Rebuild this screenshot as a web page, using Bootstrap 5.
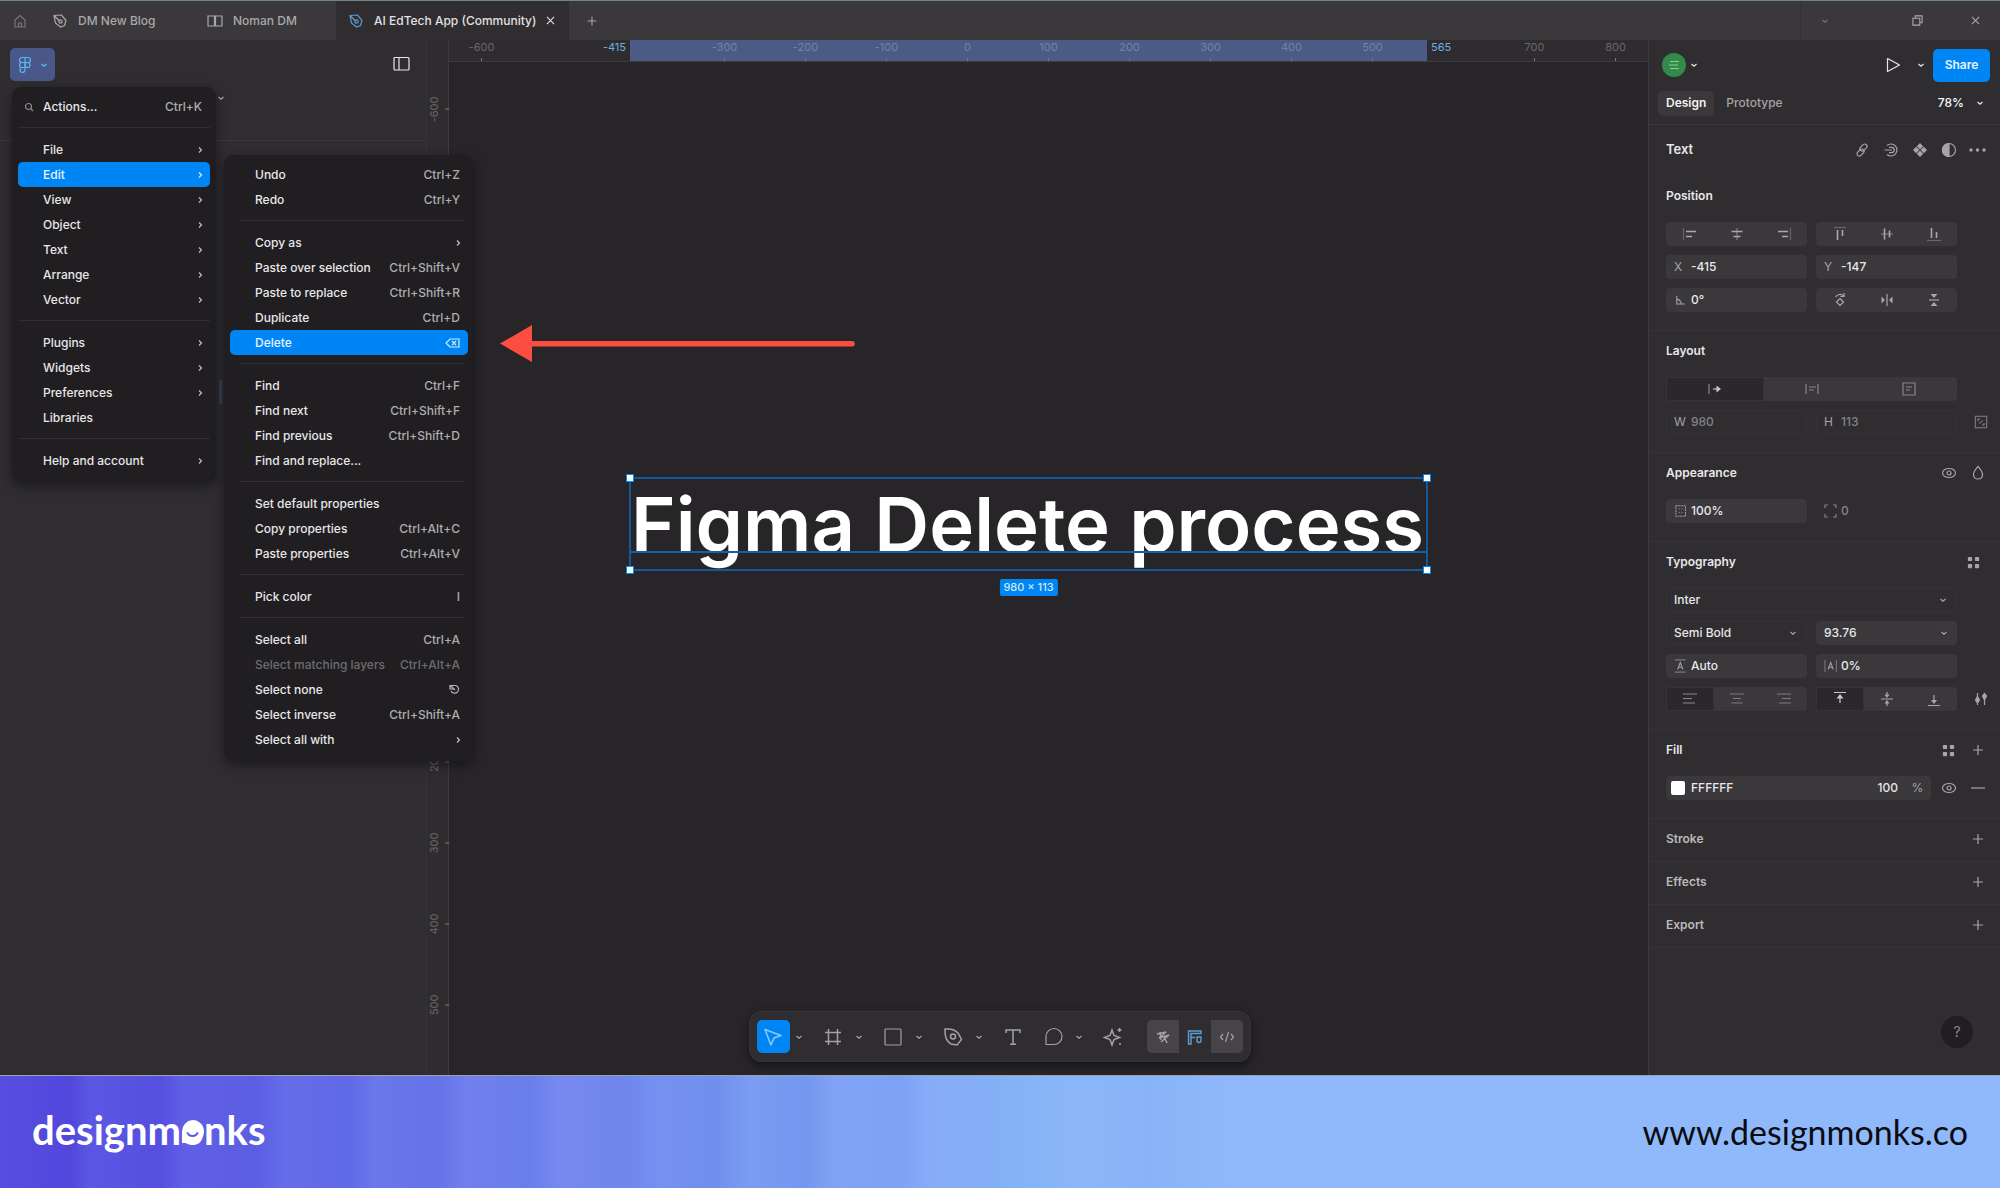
<!DOCTYPE html>
<html lang="en">
<head>
<meta charset="utf-8">
<meta name="viewport" content="width=device-width, initial-scale=1">
<title>AI EdTech App (Community)</title>
<link href="https://cdn.jsdelivr.net/npm/bootstrap@5.3.0/dist/css/bootstrap.min.css" rel="stylesheet">
<style>
:root{--panel:#2f2d30;--canvas:#272528;--menu:#201e21;--line:#39373a;--field:#3a383b;--blue:#0086f4;--dim:#a5a3a6;--txt:#e8e7e9}
body{font-family:Inter,"Liberation Sans",sans-serif;font-size:12px;line-height:16px;background:var(--canvas);color:var(--txt)}
button,input,select{font:inherit;color:inherit;background:none;border:0;padding:0;min-width:0}
ul{list-style:none}
svg{display:block;fill:none;stroke:currentColor;stroke-width:1.2;flex:none}
.ic{width:16px;height:16px}
.caret{width:8px;height:8px}
/* tab strip */
.tabstrip{height:40px;background:#3a383b;border-top:1px solid #6f8580;color:#a9a8aa;font-weight:500}
.homebtn{width:40px;padding-left:12px}
.filetab{gap:10px;padding-left:12px;color:#a9a8aa;font-weight:500}
.tab-a{width:155px}
.tab-b{width:141px}
.filetab.current{width:233px;padding-right:15px;background:var(--panel);color:#e2e1e3}
.filetab.current>svg{color:#5b9bd0}
.winbtns{width:200px;border-left:1px solid #343235}
/* left side */
.leftside{width:426px;flex:none;background:var(--panel)}
.lefthead{height:101px;border-bottom:1px solid var(--line);padding:8px 16px 0 10px}
.mainbtn{width:45px;height:33px;border-radius:5px;background:#4a5889;color:#5cb6f5}
.vruler{width:23px;flex:none;background:#2e2c2f;border-right:1px solid #3d3b3e;border-left:1px solid #343235;color:#6b696c;font-size:11px}
.vruler span{position:absolute;left:0;width:22px;height:81px;transform:translateY(-50%);display:flex;align-items:center}
.vruler b{font-weight:400;writing-mode:vertical-rl;transform:rotate(180deg);line-height:14px}
.vruler span::after{content:"";position:absolute;right:0;width:4px;height:1px;background:#7b797c}
/* canvas */
.canvas-area{flex:1 1 0;min-width:0}
.hruler{height:22px;background:#2e2c2f;border-bottom:1px solid #3d3b3e;font-size:11px;color:#69676a;overflow:hidden}
.ticks{position:relative;z-index:1;display:grid;grid-template-columns:repeat(15,81px);justify-content:center;text-align:center;line-height:15px}
.ticks span{height:21px;background:linear-gradient(#7a787b,#7a787b) center bottom/1px 3px no-repeat}
.ticks .in{color:#7581a8}
.ticks .none{visibility:hidden}
.selband{position:absolute;top:0;left:181px;width:797px;height:21px;background:#4c5b85;color:#6cb2e4}
.selband span{position:absolute;top:0;line-height:15px}
.selbox{position:absolute;left:181px;top:438px;width:797px;outline:2px solid #13599a;outline-offset:-1px}
.selbox h1{font-size:76px;font-weight:600;line-height:92px;color:#fff;white-space:nowrap;padding-left:1px}
.selbox .base{position:absolute;left:0;right:0;top:73px;height:2px;background:#0c62ad}
.hnd{position:absolute;width:8px;height:8px;background:#fff;border:1px solid var(--blue)}
.sizetag{position:absolute;top:101px;left:50%;transform:translateX(-50%);background:var(--blue);color:#cfe6fb;border-radius:2px;line-height:17px;padding:0 4px;white-space:nowrap;font-size:11px;font-weight:500}
.arrow{position:absolute;left:51px;top:285px;stroke:none}
/* menus */
.appmenu{position:absolute;z-index:5;background:var(--menu);border-radius:9px;box-shadow:0 4px 12px rgba(0,0,0,.45);font-weight:500;padding:7px 6px 9px}
.menu-main{left:12px;top:87px;width:204px}
.menu-edit{left:224px;top:155px;width:249px;padding-right:5px}
.appmenu button{width:100%;height:25px;border-radius:5px;padding:0 8px 0 25px;display:flex;align-items:center;justify-content:space-between;white-space:nowrap;position:relative}
.menu-edit button{padding-right:8px}
.appmenu kbd{font:inherit;background:none;color:#aeadaf;padding:0}
.appmenu .caret{margin-right:-2px;color:#c0bfc1}
.appmenu .on{background:var(--blue);color:#e9f4ff}
.appmenu .on svg{color:#d8ebfd}
.appmenu .off,.appmenu .off kbd{color:#6e6c6f}
.appmenu .sep{height:1px;background:#302e31;margin:8px 0 9px}
.menu-edit .sep{margin-left:10px;margin-right:4px}
.lens{position:absolute;left:6px;color:#8b898c}
.rest-caret{position:absolute;left:217px;top:94px;color:#aaa}
.rest-bar{position:absolute;left:219px;top:380px;width:3px;height:24px;background:#39415e}
/* toolbar */
.toolbar{position:absolute;z-index:4;left:50%;transform:translateX(-50%);bottom:13px;width:502px;height:51px;background:#2f2d30;border:1px solid #363437;border-radius:12px;box-shadow:0 3px 8px rgba(0,0,0,.5);padding:0 7px;color:#a3a1a4}
.toolbar .tool{width:33px;height:33px;border-radius:5px}
.toolbar .drop{width:18px;height:33px;margin-right:9px}
.toolbar .tool.on{background:var(--blue);color:#8fc8f8}
.modes{width:96px;height:33px;border-radius:5px;background:#464447;margin-left:18px;overflow:hidden}
.modes .on{background:#2f2d30;color:#5b9fd6}
.tool svg{width:20px;height:20px}
/* properties */
.props{width:352px;flex:none;background:var(--panel);border-left:1px solid #3b393c}
.phead{height:50px;padding:0 10px 0 13px}
.avatar{width:24px;height:24px;border-radius:50%;background:#338a49;color:#8ccf98}
.share{width:57px;height:33px;border-radius:5px;background:var(--blue);color:#e6f3ff;font-weight:600}
.ptabs{height:26px;margin-bottom:8px;padding:0 16px 0 9px}
.ptabs button{height:25px;padding:0 8px;border-radius:5px;color:var(--dim);font-weight:500}
.ptabs .on{background:var(--field);color:#f1f0f2;font-weight:600}
.kind{height:51px;border-top:1px solid var(--line);padding:0 8px 0 17px}
.kind h2{font-size:13px;font-weight:600}
.ib{width:29px;height:24px;color:#a6a4a7}
.psec{padding:8px 8px 18px 17px;border-bottom:1px solid #363437}
.kind+.psec{padding-top:9px}
.psec.bare{padding-bottom:10px;color:#bbb9bc}
.psec h3{font-size:12px;font-weight:600;line-height:24px}
.psec .ptitle{height:24px}
.prow{display:grid;grid-template-columns:141px 141px 1fr;gap:9px;margin-top:9px;height:24px}
.ptitle+.prow{margin-top:14px}
.prow .wide{grid-column:span 2}
.prow .ib{justify-self:end}
.fillrow{margin-top:14px}
.fillrow .fld{padding-left:5px}
.fld{display:flex;align-items:center;background:var(--field);border-radius:4px;height:24px;padding-left:8px;font-weight:500;position:relative;min-width:0}
.fld>span,.fld>svg{width:16px;margin-right:1px;color:#a5a3a6;font-weight:400}
.fld input{width:100%;flex:1}
.fld .pct{flex:0 0 34px}
.fld.ghost{background:none;border:1px solid #343235;padding-left:7px}
.fld.ghost input,.fld.clear input{color:#858386}
.fld.clear{background:none}
.fld select{width:100%;appearance:none;-webkit-appearance:none}
.fld .caret{position:absolute;right:9px;margin:0;width:8px}
.seg{display:flex;background:var(--field);border-radius:4px;height:24px;color:#a9a7aa}
.seg button{flex:1}
.seg .on{background:#2a282b;border:1px solid #343235;color:#c9c8ca}
.seg.faint{color:#7d7b7e}
.swatch{width:14px;height:14px;border-radius:2px;background:#fff;flex:none;margin-right:6px}
.helpbtn{position:absolute;right:27px;bottom:27px;width:32px;height:32px;border-radius:50%;background:#201e21;color:#8b898c;font-size:14px}
/* banner */
.banner{height:113px;border-top:1px solid #9b9fae;padding:0 32px;background:linear-gradient(90deg,#574ee1 0,#5247dc 70px,#5b57e3 90px,#564fdf 160px,#6060e6 185px,#5b5de3 255px,#666de9 285px,#6069e6 348px,#6b77eb 375px,#6573e8 438px,#727fed 465px,#697eea 530px,#7889f0 560px,#6f86ed 622px,#7690f0 660px,#708fed 715px,#7a9cf2 750px,#7498f0 807px,#80a3f5 835px,#7da2f5 900px,#87acf7 930px,#84b0f6 1000px,#8bb6f9 1080px,#88b3f8 1150px,#8fb9fb 1240px)}
.brand{font-family:Lato,sans-serif;font-weight:700;font-size:40px;line-height:48px;color:#fff;text-decoration:none;padding-bottom:4px}
.brand .face{position:relative;display:inline-block}
.brand .face svg{position:absolute;left:0;bottom:11px;width:100%;height:23px;stroke:none}
.brand .grin{fill:none;stroke:#5d58e3;stroke-width:2}
.site{font-family:Lato,sans-serif;font-size:34px;line-height:40px;color:#0b0b10;text-decoration:none}
</style>
<script src="https://cdn.jsdelivr.net/npm/bootstrap@5.3.0/dist/js/bootstrap.bundle.min.js"></script>
</head>
<body class="d-flex flex-column min-vh-100 position-relative">
<svg width="0" height="0" class="position-absolute" aria-hidden="true">
<symbol id="i-right" viewBox="0 0 8 8"><path d="M3 1.500 5.500 4 3 6.500"/></symbol>
<symbol id="i-down" viewBox="0 0 8 8"><path d="M1.500 3 4 5.200 6.500 3"/></symbol>
<symbol id="i-pen" viewBox="0 0 16 16"><path d="M2 2.500 9.500 2 14 7.500 12.500 12.500 8.500 14 3.500 10zM2.500 3l5 5"/><circle cx="8.500" cy="8.500" r="1.600"/></symbol>
<symbol id="i-eye" viewBox="0 0 16 16"><ellipse cx="8" cy="8" rx="6.500" ry="4.500"/><circle cx="8" cy="8" r="2"/></symbol>
<symbol id="i-plus" viewBox="0 0 16 16"><path d="M8 3v10M3 8h10"/></symbol>
<symbol id="i-four" viewBox="0 0 16 16"><g fill="currentColor" stroke="none"><rect x="2" y="2" width="4.500" height="4.500" rx="1"/><rect x="9.500" y="2" width="4.500" height="4.500" rx="1"/><rect x="2" y="9.500" width="4.500" height="4.500" rx="1"/><rect x="9.500" y="9.500" width="4.500" height="4.500" rx="1"/></g></symbol>
</svg>

<header class="tabstrip d-flex align-items-stretch">
  <button class="homebtn" aria-label="Home"><svg class="ic" viewBox="0 0 16 16" opacity=".55"><path d="M3 7 8 2.500 13 7v7H3zM6.500 14v-4h3v4"/></svg></button>
  <button class="filetab tab-a d-flex align-items-center"><svg class="ic"><use href="#i-pen"/></svg>DM New Blog</button>
  <button class="filetab tab-b d-flex align-items-center"><svg class="ic" viewBox="0 0 16 16"><path d="M1 3h6.500v10H1zM8.500 3H15v10H8.500z"/></svg>Noman DM</button>
  <div class="filetab current d-flex align-items-center"><svg class="ic"><use href="#i-pen"/></svg><span class="text-nowrap">AI EdTech App (Community)</span><button class="ms-auto" aria-label="Close tab"><svg width="9" height="9" viewBox="0 0 10 10"><path d="M1 1l8 8M9 1 1 9"/></svg></button></div>
  <button class="px-3" aria-label="New tab"><svg width="14" height="14" viewBox="0 0 16 16"><use href="#i-plus"/></svg></button>
  <div class="flex-grow-1"></div>
  <div class="winbtns d-flex align-items-center justify-content-between ps-3 pe-3">
    <button class="ps-1" aria-label="More"><svg width="8" height="8" viewBox="0 0 8 8" opacity=".5"><use href="#i-down"/></svg></button>
    <div class="d-flex gap-5"><button aria-label="Restore window"><svg width="11" height="11" viewBox="0 0 12 12"><path d="M1 3.500h7.500V11H1zM3.500 3V1H11v7.500H9"/></svg></button><button class="me-1" aria-label="Close window"><svg width="9" height="9" viewBox="0 0 10 10"><path d="M1 1l8 8M9 1 1 9"/></svg></button></div>
  </div>
</header>

<main class="d-flex flex-grow-1 position-relative">
  <aside class="leftside">
    <div class="lefthead d-flex justify-content-between align-items-start">
      <button class="mainbtn d-flex align-items-center justify-content-center gap-2" aria-label="Main menu"><svg width="14" height="18" viewBox="0 0 14 18"><path d="M4 1.500h6a2.500 2.500 0 0 1 0 5H4a2.500 2.500 0 0 1 0-5zM4 6.500h3v5H4a2.500 2.500 0 0 1 0-5zM4 11.500h3V14a2.500 2.500 0 1 1-3-2.500zM7 1.500v5"/><circle cx="9.500" cy="9" r="2.500"/></svg><svg class="caret"><use href="#i-down"/></svg></button>
      <button class="mt-2" aria-label="Toggle panels"><svg width="17" height="16" viewBox="0 0 17 16"><rect x="1" y="1.500" width="15" height="12.500" rx="1"/><path d="M6 1.500V14"/></svg></button>
    </div>
  </aside>
  <div class="vruler position-relative">
    <span style="top:69px"><b>-600</b></span><span style="top:722px"><b>200</b></span><span style="top:803px"><b>300</b></span><span style="top:884px"><b>400</b></span><span style="top:965px"><b>500</b></span>
  </div>
  <section class="canvas-area position-relative">
    <div class="hruler position-relative">
      <div class="selband"><span class="end-100 pe-1">-415</span><span class="start-100 ps-1">565</span></div>
      <div class="ticks"><span>-600</span><span class="none">-500</span><span class="none">-400</span><span class="in">-300</span><span class="in">-200</span><span class="in">-100</span><span class="in">0</span><span class="in">100</span><span class="in">200</span><span class="in">300</span><span class="in">400</span><span class="in">500</span><span class="none">600</span><span>700</span><span>800</span></div>
    </div>
    <svg class="arrow" width="360" height="38" viewBox="0 0 360 38"><path d="M0 18.500 32 0v16h320a2.700 2.700 0 0 1 0 5.500H32V37z" fill="#fb4e40"/></svg>
    <div class="selbox">
      <h1 class="m-0">Figma Delete process</h1>
      <div class="base"></div>
      <i class="hnd top-0 start-0 translate-middle"></i><i class="hnd top-0 start-100 translate-middle"></i><i class="hnd top-100 start-0 translate-middle"></i><i class="hnd top-100 start-100 translate-middle"></i>
      <div class="sizetag">980 × 113</div>
    </div>
  </section>

  <aside class="props position-relative">
    <div class="phead d-flex align-items-center">
      <span class="avatar d-flex align-items-center justify-content-center"><svg width="14" height="14" viewBox="0 0 14 14" stroke-width="2"><path d="M3 3.500h9M2 7h9M3 10.500h9"/></svg></span>
      <svg class="caret ms-1"><use href="#i-down"/></svg>
      <button class="ms-auto me-3" aria-label="Present"><svg class="ic" viewBox="0 0 16 16"><path d="M2.500 1.500 14.500 8 2.500 14.500z" stroke-linejoin="round"/></svg></button>
      <svg class="caret me-2"><use href="#i-down"/></svg>
      <button class="share">Share</button>
    </div>
    <div class="ptabs d-flex align-items-center"><button class="on">Design</button><button class="ms-1">Prototype</button><button class="ms-auto me-1 text-light">78%</button><svg class="caret"><use href="#i-down"/></svg></div>
    <div class="kind d-flex align-items-center"><h2 class="m-0 me-auto">Text</h2>
      <button class="ib d-flex align-items-center justify-content-center" aria-label="Link"><svg class="ic" viewBox="0 0 16 16"><rect x="7.200" y="1.500" width="4.600" height="8" rx="2.300" transform="rotate(45 9.500 5.500)"/><rect x="4.200" y="6.500" width="4.600" height="8" rx="2.300" transform="rotate(45 6.500 10.500)"/></svg></button>
      <button class="ib d-flex align-items-center justify-content-center" aria-label="Variables"><svg class="ic" viewBox="0 0 16 16"><path d="M4 3.500A6 6 0 1 1 4 12.500M1.500 8H9M6 5.300h2.500a2.700 2.700 0 0 1 0 5.400H6"/></svg></button>
      <button class="ib d-flex align-items-center justify-content-center" aria-label="Create component"><svg class="ic" viewBox="0 0 16 16"><path fill="currentColor" stroke="none" d="M8 1l3.200 3.200L8 7.400 4.800 4.200zM11.800 4.800 15 8l-3.200 3.200L8.600 8zM4.200 4.800 7.400 8l-3.200 3.200L1 8zM8 8.600l3.200 3.200L8 15l-3.200-3.200z"/></svg></button>
      <button class="ib d-flex align-items-center justify-content-center" aria-label="Mask"><svg class="ic" viewBox="0 0 16 16"><circle cx="8" cy="8" r="6.500"/><path d="M8 1.500a6.500 6.500 0 0 0 0 13z" fill="currentColor"/></svg></button>
      <button class="ib d-flex align-items-center justify-content-center" aria-label="More options"><svg width="17" height="16" viewBox="0 0 17 16"><g fill="currentColor" stroke="none"><circle cx="2" cy="8" r="1.700"/><circle cx="8.500" cy="8" r="1.700"/><circle cx="15" cy="8" r="1.700"/></g></svg></button>
    </div>

    <div class="psec"><div class="ptitle"><h3 class="m-0">Position</h3></div>
      <div class="prow">
        <div class="seg"><button class="d-flex justify-content-center align-items-center" aria-label="Align left"><svg class="ic" viewBox="0 0 16 16"><path d="M1.500 2v12" opacity=".4"/><path d="M4 5.500h10M4 10.500h6" stroke-width="1.600"/></svg></button><button class="d-flex justify-content-center align-items-center" aria-label="Align centre"><svg class="ic" viewBox="0 0 16 16"><path d="M8 2v12" opacity=".6"/><path d="M2.500 5.500h11M4.500 10.500h7" stroke-width="1.600"/></svg></button><button class="d-flex justify-content-center align-items-center" aria-label="Align right"><svg class="ic" viewBox="0 0 16 16"><path d="M14.500 2v12" opacity=".4"/><path d="M2 5.500h10M6 10.500h6" stroke-width="1.600"/></svg></button></div>
        <div class="seg"><button class="d-flex justify-content-center align-items-center" aria-label="Align top"><svg class="ic" viewBox="0 0 16 16"><path d="M2 1.500h12" opacity=".4"/><path d="M5.500 4v10M10.500 4v6" stroke-width="1.600"/></svg></button><button class="d-flex justify-content-center align-items-center" aria-label="Align middle"><svg class="ic" viewBox="0 0 16 16"><path d="M2 8h12" opacity=".6"/><path d="M5.500 2.500v11M10.500 4.500v7" stroke-width="1.600"/></svg></button><button class="d-flex justify-content-center align-items-center" aria-label="Align bottom"><svg class="ic" viewBox="0 0 16 16"><path d="M1 14.500h14" opacity=".4"/><path d="M5.500 2v10M10.500 6v6" stroke-width="1.600"/></svg></button></div>
      </div>
      <div class="prow"><label class="fld"><span>X</span><input value="-415"></label><label class="fld"><span>Y</span><input value="-147"></label></div>
      <div class="prow"><label class="fld"><svg height="14" viewBox="0 0 16 16"><path d="M2 3v9.500h9M2 7a6 6 0 0 1 5 5"/></svg><input value="0°" aria-label="Rotation"></label>
        <div class="seg"><button class="d-flex justify-content-center align-items-center" aria-label="Rotate 90"><svg class="ic" viewBox="0 0 16 16"><path d="M8 6.500 11.500 10 8 13.500 4.500 10zM3.500 5a5 5 0 0 1 8-1M12 1v3.500H8.500"/></svg></button><button class="d-flex justify-content-center align-items-center" aria-label="Flip horizontal"><svg class="ic" viewBox="0 0 16 16"><path d="M8 2v12"/><path d="M2.500 4.500 6 8l-3.500 3.500zM13.500 4.500 10 8l3.500 3.500z" fill="currentColor" stroke="none"/></svg></button><button class="d-flex justify-content-center align-items-center" aria-label="Flip vertical"><svg class="ic" viewBox="0 0 16 16"><path d="M3 8h10"/><path d="M4.500 2 8 6l3.500-4zM4.500 14 8 10l3.500 4z" fill="currentColor" stroke="none"/></svg></button></div></div>
    </div>

    <div class="psec"><div class="ptitle"><h3 class="m-0">Layout</h3></div>
      <div class="prow"><div class="seg wide"><button class="on d-flex justify-content-center align-items-center" aria-label="Auto width"><svg class="ic" viewBox="0 0 16 16"><path d="M2 3v10" opacity=".6"/><path d="M6 8h5"/><path d="M9.500 4.500 14 8l-4.500 3.500z" fill="currentColor" stroke="none"/></svg></button><button class="d-flex justify-content-center align-items-center" aria-label="Auto height"><svg class="ic" viewBox="0 0 16 16"><path d="M2 3v10M14 3v10M5 6h7M5 9h5" opacity=".7"/></svg></button><button class="d-flex justify-content-center align-items-center" aria-label="Fixed size"><svg class="ic" viewBox="0 0 16 16"><path d="M2 2h12v12H2zM5 6h6M5 9h4" opacity=".7"/></svg></button></div></div>
      <div class="prow"><label class="fld ghost"><span>W</span><input value="980"></label><label class="fld ghost"><span>H</span><input value="113"></label><button class="ib d-flex align-items-center justify-content-center" aria-label="Lock ratio"><svg width="14" height="14" viewBox="0 0 16 16"><path d="M1.500 1.500h13v13h-13zM4.500 7V4.500H7M11.500 9v2.500H9M6 10l4-4" opacity=".7"/></svg></button></div>
    </div>

    <div class="psec"><div class="ptitle d-flex align-items-center"><h3 class="m-0 me-auto">Appearance</h3><button class="ib d-flex align-items-center justify-content-center" aria-label="Visibility"><svg class="ic"><use href="#i-eye"/></svg></button><button class="ib d-flex align-items-center justify-content-center" aria-label="Blend mode"><svg class="ic" viewBox="0 0 16 16"><path d="M8 1.500c2.500 3 4.500 5 4.500 8 0 3-2 4.500-4.500 4.500S3.500 12.500 3.500 9.500c0-3 2-5 4.500-8z"/></svg></button></div>
      <div class="prow"><label class="fld"><svg height="14" viewBox="0 0 16 16"><rect x="1" y="2" width="11" height="12" stroke-dasharray="2 1"/><path d="M5 5v1M8 5v1M5 9v1M8 9v1"/></svg><input value="100%" aria-label="Opacity"></label><label class="fld clear"><svg height="16" viewBox="0 0 16 16" opacity=".7"><path d="M1 5V2h3M9 2h3v3M12 11v3H9M4 14H1v-3"/></svg><input value="0" aria-label="Corner radius"></label></div>
    </div>

    <div class="psec"><div class="ptitle d-flex align-items-center"><h3 class="m-0 me-auto">Typography</h3><button class="ib d-flex align-items-center justify-content-center me-1" aria-label="Text styles"><svg width="15" height="15" viewBox="0 0 16 16"><use href="#i-four"/></svg></button></div>
      <div class="prow"><label class="fld ghost wide"><select aria-label="Font"><option>Inter</option></select><svg class="caret"><use href="#i-down"/></svg></label></div>
      <div class="prow"><label class="fld ghost"><select aria-label="Weight"><option>Semi Bold</option></select><svg class="caret"><use href="#i-down"/></svg></label><label class="fld"><select aria-label="Size"><option>93.76</option></select><svg class="caret"><use href="#i-down"/></svg></label></div>
      <div class="prow"><label class="fld"><svg height="14" viewBox="0 0 16 16"><path d="M0 1h12M0 15h12" opacity=".6"/><path d="M3 12l3-8 3 8M4 9.500h4"/></svg><input value="Auto" aria-label="Line height"></label><label class="fld"><svg height="14" viewBox="0 0 16 16"><path d="M0 1v14M13 1v14" opacity=".6"/><path d="M3.500 12l3-8 3 8M4.500 9.500h4"/></svg><input value="0%" aria-label="Letter spacing"></label></div>
      <div class="prow"><div class="seg faint"><button class="on d-flex justify-content-center align-items-center" aria-label="Text left"><svg class="ic" viewBox="0 0 16 16" opacity=".6"><path d="M1 3h14M1 7.500h9M1 12h12"/></svg></button><button class="d-flex justify-content-center align-items-center" aria-label="Text centre"><svg class="ic" viewBox="0 0 16 16"><path d="M1 3h14M4 7.500h8M2.500 12h11"/></svg></button><button class="d-flex justify-content-center align-items-center" aria-label="Text right"><svg class="ic" viewBox="0 0 16 16"><path d="M1 3h14M6 7.500h9M3 12h12"/></svg></button></div>
        <div class="seg"><button class="on d-flex justify-content-center align-items-center" aria-label="Text top"><svg class="ic" viewBox="0 0 16 16"><path d="M2 1.500h12M8 12V4"/><path d="M4.500 7.500 8 3l3.500 4.500z" fill="currentColor" stroke="none"/></svg></button><button class="d-flex justify-content-center align-items-center" aria-label="Text middle"><svg class="ic" viewBox="0 0 16 16"><path d="M2 8h12M8 1v4M8 15v-4"/><path d="M5.500 3.500h5L8 7zM5.500 12.500h5L8 9z" fill="currentColor" stroke="none"/></svg></button><button class="d-flex justify-content-center align-items-center" aria-label="Text bottom"><svg class="ic" viewBox="0 0 16 16"><path d="M2 14.500h12M8 4v6"/><path d="M5 9h6l-3 4z" fill="currentColor" stroke="none"/></svg></button></div>
        <button class="ib d-flex align-items-center justify-content-center" aria-label="Type settings"><svg class="ic" viewBox="0 0 16 16"><path d="M4.500 2v4M4.500 11v3M11.500 2v3M11.500 9v5"/><path d="M4.500 5.500 6.500 9l-2 3-2-3zM11.500 2.500l2 2.500-2 4-2-4z" fill="currentColor"/></svg></button></div>
    </div>

    <div class="psec"><div class="ptitle d-flex align-items-center"><h3 class="m-0 me-auto">Fill</h3><button class="ib d-flex align-items-center justify-content-center" aria-label="Fill styles"><svg width="15" height="15" viewBox="0 0 16 16"><use href="#i-four"/></svg></button><button class="ib d-flex align-items-center justify-content-center" aria-label="Add fill"><svg class="ic"><use href="#i-plus"/></svg></button></div>
      <div class="fillrow d-flex align-items-center"><div class="fld flex-grow-1 pe-2"><i class="swatch"></i><input value="FFFFFF" aria-label="Fill colour"><input class="pct" value="100" aria-label="Fill opacity"><span class="m-0 w-auto">%</span></div><button class="ib ms-1 d-flex align-items-center justify-content-center" aria-label="Toggle fill"><svg class="ic"><use href="#i-eye"/></svg></button><button class="ib d-flex align-items-center justify-content-center" aria-label="Remove fill"><svg class="ic" viewBox="0 0 16 16"><path d="M1 8h14"/></svg></button></div>
    </div>
    <div class="psec bare"><div class="ptitle d-flex align-items-center"><h3 class="m-0 me-auto">Stroke</h3><button class="ib d-flex align-items-center justify-content-center" aria-label="Add stroke"><svg class="ic"><use href="#i-plus"/></svg></button></div></div>
    <div class="psec bare"><div class="ptitle d-flex align-items-center"><h3 class="m-0 me-auto">Effects</h3><button class="ib d-flex align-items-center justify-content-center" aria-label="Add effect"><svg class="ic"><use href="#i-plus"/></svg></button></div></div>
    <div class="psec bare"><div class="ptitle d-flex align-items-center"><h3 class="m-0 me-auto">Export</h3><button class="ib d-flex align-items-center justify-content-center" aria-label="Add export"><svg class="ic"><use href="#i-plus"/></svg></button></div></div>
    <button class="helpbtn">?</button>
  </aside>

  <div class="toolbar d-flex align-items-center">
    <button class="tool on d-flex align-items-center justify-content-center" aria-label="Move"><svg viewBox="0 0 20 20"><path d="M2 2.500 18 8.500 11 11 8 18z" stroke-width="1.500" stroke-linejoin="round"/></svg></button><button class="drop d-flex align-items-center justify-content-center" aria-label="Move tools"><svg class="caret"><use href="#i-down"/></svg></button>
    <button class="tool d-flex align-items-center justify-content-center" aria-label="Frame"><svg viewBox="0 0 20 20"><path d="M5.500 2v16M14.500 2v16M2 5.500h16M2 14.500h16" stroke-width="1.500"/></svg></button><button class="drop d-flex align-items-center justify-content-center" aria-label="Region tools"><svg class="caret"><use href="#i-down"/></svg></button>
    <button class="tool d-flex align-items-center justify-content-center" aria-label="Rectangle"><svg viewBox="0 0 20 20"><rect x="2" y="2" width="16" height="16" rx="1"/></svg></button><button class="drop d-flex align-items-center justify-content-center" aria-label="Shape tools"><svg class="caret"><use href="#i-down"/></svg></button>
    <button class="tool d-flex align-items-center justify-content-center" aria-label="Pen"><svg viewBox="0 0 20 20"><path d="M2 2c6-.5 10 .5 13 4l3.500 6.500L14 18l-6-1C3 14 1.500 9 2 2z" stroke-width="1.500"/><circle cx="10" cy="9.500" r="2.500" stroke-width="1.500"/></svg></button><button class="drop d-flex align-items-center justify-content-center" aria-label="Creation tools"><svg class="caret"><use href="#i-down"/></svg></button>
    <button class="tool d-flex align-items-center justify-content-center" aria-label="Text"><svg viewBox="0 0 20 20"><path d="M3 6V3h14v3M10 3v14M7 17.300h6" stroke-width="1.500"/></svg></button>
    <button class="tool ms-2 d-flex align-items-center justify-content-center" aria-label="Comment"><svg viewBox="0 0 20 20"><path d="M2 17.500V9.500a8 8 0 0 1 16 0 8 8 0 0 1-8 8z"/></svg></button><button class="drop me-0 d-flex align-items-center justify-content-center" aria-label="Comment tools"><svg class="caret"><use href="#i-down"/></svg></button>
    <button class="tool ms-2 d-flex align-items-center justify-content-center" aria-label="Actions"><svg viewBox="0 0 20 20"><path d="M9 3l2 5.500 5.500 2-5.500 2L9 18l-2-5.500-5.500-2 5.500-2zM16.500 1v4M14.500 3h4M17 16v2" stroke-width="1.500"/></svg></button>
    <div class="modes d-flex">
      <button class="flex-fill d-flex align-items-center justify-content-center" aria-label="Draw"><svg class="ic" viewBox="0 0 16 16"><path d="M2 5l9-2-7 6 10-3-8 7M9 8l3 6M5 3l1 8" stroke-width="1.500"/></svg></button>
      <button class="on flex-fill d-flex align-items-center justify-content-center" aria-label="Design"><svg class="ic" viewBox="0 0 16 16"><path d="M1.500 15V2H14v2.500H4V15zM4 8.500h4M10 8h4v3.500a2 2 0 1 1-4 0z" stroke-width="1.400"/></svg></button>
      <button class="flex-fill d-flex align-items-center justify-content-center" aria-label="Dev Mode"><svg class="ic" viewBox="0 0 16 16"><path d="M4 5 1.500 8 4 11M12 5l2.500 3L12 11M9.500 3l-3 10"/></svg></button>
    </div>
  </div>
</main>

<i class="rest-caret"><svg class="caret"><use href="#i-down"/></svg></i><i class="rest-bar"></i>
<ul class="appmenu menu-main m-0">
  <li><button><svg class="lens" width="10" height="10" viewBox="0 0 10 10"><circle cx="4.500" cy="4.500" r="3"/><path d="M7 7l2 2"/></svg>Actions...<kbd>Ctrl+K</kbd></button></li>
  <li class="sep"></li>
  <li><button>File<svg class="caret"><use href="#i-right"/></svg></button></li>
  <li><button class="on">Edit<svg class="caret"><use href="#i-right"/></svg></button></li>
  <li><button>View<svg class="caret"><use href="#i-right"/></svg></button></li>
  <li><button>Object<svg class="caret"><use href="#i-right"/></svg></button></li>
  <li><button>Text<svg class="caret"><use href="#i-right"/></svg></button></li>
  <li><button>Arrange<svg class="caret"><use href="#i-right"/></svg></button></li>
  <li><button>Vector<svg class="caret"><use href="#i-right"/></svg></button></li>
  <li class="sep"></li>
  <li><button>Plugins<svg class="caret"><use href="#i-right"/></svg></button></li>
  <li><button>Widgets<svg class="caret"><use href="#i-right"/></svg></button></li>
  <li><button>Preferences<svg class="caret"><use href="#i-right"/></svg></button></li>
  <li><button>Libraries</button></li>
  <li class="sep"></li>
  <li><button>Help and account<svg class="caret"><use href="#i-right"/></svg></button></li>
</ul>
<ul class="appmenu menu-edit m-0">
  <li><button>Undo<kbd>Ctrl+Z</kbd></button></li>
  <li><button>Redo<kbd>Ctrl+Y</kbd></button></li>
  <li class="sep"></li>
  <li><button>Copy as<svg class="caret"><use href="#i-right"/></svg></button></li>
  <li><button>Paste over selection<kbd>Ctrl+Shift+V</kbd></button></li>
  <li><button>Paste to replace<kbd>Ctrl+Shift+R</kbd></button></li>
  <li><button>Duplicate<kbd>Ctrl+D</kbd></button></li>
  <li><button class="on">Delete<svg width="15" height="10" viewBox="0 0 15 10"><path d="M5 1h9v8H5L1 5zM7 3l4 4M11 3 7 7"/></svg></button></li>
  <li class="sep"></li>
  <li><button>Find<kbd>Ctrl+F</kbd></button></li>
  <li><button>Find next<kbd>Ctrl+Shift+F</kbd></button></li>
  <li><button>Find previous<kbd>Ctrl+Shift+D</kbd></button></li>
  <li><button>Find and replace...</button></li>
  <li class="sep"></li>
  <li><button>Set default properties</button></li>
  <li><button>Copy properties<kbd>Ctrl+Alt+C</kbd></button></li>
  <li><button>Paste properties<kbd>Ctrl+Alt+V</kbd></button></li>
  <li class="sep"></li>
  <li><button>Pick color<kbd>I</kbd></button></li>
  <li class="sep"></li>
  <li><button>Select all<kbd>Ctrl+A</kbd></button></li>
  <li><button class="off">Select matching layers<kbd>Ctrl+Alt+A</kbd></button></li>
  <li><button>Select none<svg width="11" height="11" viewBox="0 0 11 11" opacity=".75"><path d="M2.500 1.500H7A4 4 0 1 1 2 7M1 1v4h4M1.500 1.500 6 6"/></svg></button></li>
  <li><button>Select inverse<kbd>Ctrl+Shift+A</kbd></button></li>
  <li><button>Select all with<svg class="caret"><use href="#i-right"/></svg></button></li>
</ul>

<footer class="banner d-flex align-items-center justify-content-between">
  <a class="brand" href="#">designm<span class="face">o<svg viewBox="0 0 24 24" preserveAspectRatio="none"><path fill="#fff" d="M12 0a12 12 0 1 1 0 24H1V12A12 12 0 0 1 12 0z"/><path class="grin" d="M6.500 13c2 5 9 5 11 0"/></svg></span>nks</a>
  <a class="site" href="#">www.designmonks.co</a>
</footer>
</body>
</html>
